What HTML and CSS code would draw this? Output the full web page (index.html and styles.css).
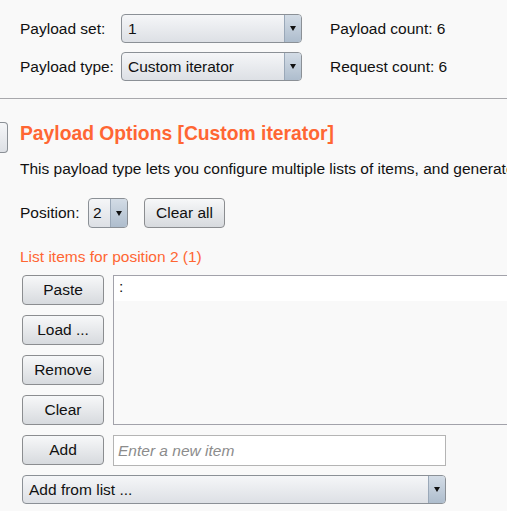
FILE: index.html
```html
<!DOCTYPE html>
<html>
<head>
<meta charset="utf-8">
<link rel="stylesheet" href="styles.css">
</head>
<body>
<div class="top">
  <div class="toprow">
    <span class="lbl">Payload set:</span>
    <div class="combo wide"><span class="val">1</span><span class="arrow"><i></i></span></div>
    <span class="count">Payload count: 6</span>
  </div>
  <div class="toprow">
    <span class="lbl">Payload type:</span>
    <div class="combo wide"><span class="val">Custom iterator</span><span class="arrow"><i></i></span></div>
    <span class="count">Request count: 6</span>
  </div>
</div>
<div class="section">
  <div class="headrow">
    <div class="stub"></div>
    <h2 class="heading">Payload Options [Custom iterator]</h2>
  </div>
  <div class="content">
    <p class="desc">This payload type lets you configure multiple lists of items, and generate</p>
    <div class="posrow">
      <span class="poslbl">Position:</span>
      <div class="combo small"><span class="val">2</span><span class="arrow"><i></i></span></div>
      <button class="btn clearall">Clear all</button>
    </div>
    <div class="listlbl">List items for position 2 (1)</div>
    <div class="grid">
      <button class="btn">Paste</button>
      <div class="list"><div class="item">:</div></div>
      <button class="btn">Load ...</button>
      <button class="btn">Remove</button>
      <button class="btn">Clear</button>
      <button class="btn">Add</button>
      <div class="input">Enter a new item</div>
      <div class="combo full"><span class="val">Add from list ...</span><span class="arrow"><i></i></span></div>
    </div>
  </div>
</div>
</body>
</html>
```
FILE: styles.css
```css
html, body {
  margin: 0;
  padding: 0;
  background: #f9f9f9;
  overflow: hidden;
  width: 507px;
  height: 511px;
}
body {
  font-family: "Liberation Sans", Arial, sans-serif;
  font-size: 15.5px;
  color: #111;
}
.top {
  padding: 14px 0 17px 20px;
  border-bottom: 1px solid #a8a8ac;
  display: flex;
  flex-direction: column;
  gap: 9px;
}
.toprow {
  display: flex;
  align-items: center;
  height: 29px;
}
.lbl {
  width: 101px;
}
.count {
  margin-left: 28px;
}
.combo {
  box-sizing: border-box;
  height: 29px;
  border: 1px solid #8b9096;
  border-radius: 4px;
  background: linear-gradient(#f5f6f8, #dde0e5);
  display: flex;
  align-items: stretch;
  overflow: hidden;
}
.combo .val {
  flex: 1;
  padding-left: 6px;
  display: flex;
  align-items: center;
  white-space: nowrap;
}
.combo .arrow {
  width: 16px;
  border-left: 1px solid #9aa8b8;
  background: linear-gradient(#d3dce6, #aebdcd);
  display: flex;
  align-items: center;
  justify-content: center;
}
.combo .arrow i {
  width: 0;
  height: 0;
  border-left: 3.5px solid transparent;
  border-right: 3.5px solid transparent;
  border-top: 5px solid #111;
}
.combo.wide { width: 181px; }
.combo.small { width: 40px; height: 30px; }
.combo.small .val { padding-left: 4px; }
.combo.full { width: 424px; grid-column: 1 / 3; }
.section {
  padding-top: 23px;
}
.headrow {
  display: flex;
  align-items: flex-start;
}
.stub {
  box-sizing: border-box;
  width: 8px;
  height: 31px;
  border: 1px solid #8b9096;
  border-left: none;
  border-radius: 0 4px 4px 0;
  background: linear-gradient(#f5f6f8, #dde0e5);
}
.heading {
  margin: 1px 0 0 12px;
  font-size: 19.3px;
  font-weight: bold;
  color: #ff6633;
  line-height: 22px;
  white-space: nowrap;
}
.content {
  padding-left: 20px;
}
.desc {
  margin: 7px 0 0 0;
  line-height: 18px;
  white-space: nowrap;
}
.posrow {
  margin-top: 20px;
  display: flex;
  align-items: center;
  height: 30px;
}
.poslbl {
  width: 68px;
}
.btn {
  box-sizing: border-box;
  height: 30px;
  border: 1px solid #8b8d90;
  border-radius: 4px;
  background: linear-gradient(#f7f8f9, #d7dade);
  font-family: inherit;
  font-size: 15.5px;
  color: #111;
  padding: 0;
  margin: 0;
}
.clearall {
  width: 81px;
  margin-left: 16px;
}
.listlbl {
  margin-top: 20px;
  color: #ff6633;
  line-height: 18px;
}
.grid {
  margin-top: 9px;
  margin-left: 2px;
  display: grid;
  grid-template-columns: 82px 333px;
  grid-template-rows: repeat(5, 30px) 29px;
  column-gap: 9px;
  row-gap: 10px;
}
.list {
  grid-column: 2;
  grid-row: 1 / 5;
  box-sizing: border-box;
  width: 420px;
  height: 150px;
  border: 1px solid #a2a2aa;
  border-right: none;
  background: #f9f9f9;
}
.item {
  background: #fff;
  height: 25px;
  line-height: 22px;
  padding-left: 5px;
}
.input {
  grid-column: 2;
  box-sizing: border-box;
  height: 31px;
  border: 1px solid #b4b4b4;
  background: #fff;
  color: #8c8c8c;
  font-style: italic;
  padding-left: 4px;
  display: flex;
  align-items: center;
}
```
